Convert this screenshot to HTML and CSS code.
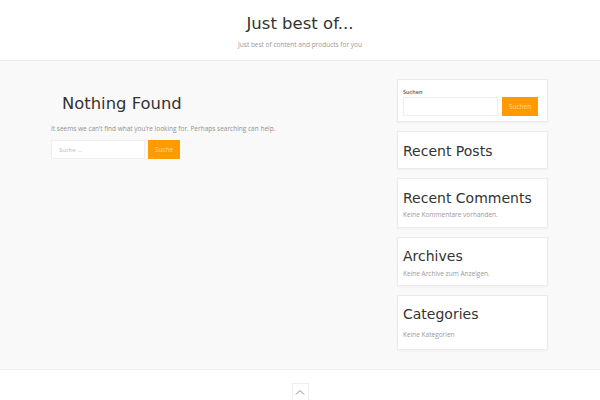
FILE: index.html
```html
<!DOCTYPE html>
<html>
<head>
<meta charset="utf-8">
<link rel="stylesheet" href="styles.css">
</head>
<body>
<header class="site-header">
  <div class="site-title">Just best of...</div>
  <div class="site-desc">Just best of content and products for you</div>
</header>
<div class="site-main">
  <div class="container">
    <main class="content">
      <h1 class="page-title">Nothing Found</h1>
      <p class="lead">It seems we can’t find what you’re looking for. Perhaps searching can help.</p>
      <form class="search-form">
        <input class="search-field" type="text" placeholder="Suche …">
        <button class="btn" type="button">Suche</button>
      </form>
    </main>
    <aside class="sidebar">
      <section class="widget widget-search">
        <label class="wlabel">Suchen</label>
        <div class="wsearch">
          <input class="wfield" type="text">
          <button class="btn btn-w" type="button">Suchen</button>
        </div>
      </section>
      <section class="widget w-posts">
        <h2 class="wtitle">Recent Posts</h2>
      </section>
      <section class="widget w-comments">
        <h2 class="wtitle">Recent Comments</h2>
        <p class="wtext">Keine Kommentare vorhanden.</p>
      </section>
      <section class="widget w-archives">
        <h2 class="wtitle">Archives</h2>
        <p class="wtext wtext-a">Keine Archive zum Anzeigen.</p>
      </section>
      <section class="widget w-cats">
        <h2 class="wtitle">Categories</h2>
        <p class="wtext wcat">Keine Kategorien</p>
      </section>
    </aside>
  </div>
</div>
<footer class="site-footer">
  <div class="totop">
    <svg width="10" height="6" viewBox="0 0 10 6"><path d="M1 5.5 L5 1.5 L9 5.5" fill="none" stroke="#888" stroke-width="1"/></svg>
  </div>
</footer>
</body>
</html>
```

FILE: styles.css
```css
* { box-sizing: border-box; }
html, body { margin: 0; padding: 0; }
body {
  width: 600px;
  height: 400px;
  overflow: hidden;
  background: #fff;
  font-family: "Open Sans", "Liberation Sans", sans-serif;
  color: #444;
}
.site-header {
  height: 61px;
  border-bottom: 1px solid #ececec;
  text-align: center;
  padding-top: 12px;
}
.site-title {
  font-family: "DejaVu Sans", sans-serif;
  font-size: 16.5px;
  line-height: 24px;
  color: #333;
}
.site-desc {
  font-size: 6.5px;
  line-height: 10px;
  margin-top: 4px;
  color: #999;
}
.site-main {
  background: #f9f9f9;
  height: 309px;
  border-bottom: 1px solid #f0f0f0;
}
.container {
  display: flex;
  padding: 18px 52px 0 51px;
}
.content {
  flex: 1;
  padding-top: 13px;
}
.page-title {
  margin: 0 0 0 11px;
  font-family: "DejaVu Sans", sans-serif;
  font-weight: normal;
  font-size: 16.4px;
  line-height: 24px;
  color: #333;
}
.lead {
  margin: 8px 0 0;
  font-size: 6.5px;
  line-height: 10px;
  color: #929292;
}
.search-form {
  display: flex;
  margin-top: 6px;
}
.search-field {
  width: 94px;
  height: 19px;
  border: 1px solid #eee;
  background: #fff;
  padding: 0 7px;
  font-family: inherit;
  font-size: 6px;
  outline: none;
}
.search-field::placeholder { color: #bbb; }
.btn {
  margin-left: 3px;
  width: 32px;
  height: 19px;
  border: 0;
  background: #ff9a00;
  color: #ffd79a;
  font-family: inherit;
  font-size: 6.5px;
  padding: 0;
}
.sidebar {
  width: 151px;
  display: flex;
  flex-direction: column;
  gap: 9px;
}
.widget {
  background: #fff;
  border: 1px solid #ececec;
  box-shadow: 0 1px 2px rgba(0,0,0,0.04);
  padding: 0 5px;
}
.widget-search {
  height: 43px;
  padding-top: 8px;
}
.wlabel {
  display: block;
  font-size: 5.5px;
  font-weight: 600;
  line-height: 8px;
  color: #555;
}
.wsearch {
  display: flex;
  margin-top: 1px;
}
.wfield {
  width: 95px;
  height: 19px;
  border: 1px solid #eee;
  background: #fff;
  outline: none;
}
.btn-w {
  margin-left: 4px;
  width: 36px;
}
.wtitle {
  margin: 0;
  font-family: "DejaVu Sans", sans-serif;
  font-weight: normal;
  font-size: 14px;
  line-height: 20px;
  color: #333;
}
.w-posts { height: 38px; padding-top: 9px; }
.w-comments { height: 50px; padding-top: 9px; }
.w-archives { height: 49px; padding-top: 8px; }
.w-cats { height: 55px; padding-top: 8px; }
.wtext {
  margin: 2px 0 0;
  font-size: 6.5px;
  line-height: 10px;
  color: #999;
}
.wtext-a { margin-top: 3px; }
.wcat { margin-top: 6px; }
.site-footer {
  height: 30px;
  background: #fff;
  display: flex;
  justify-content: center;
  padding-top: 13px;
}
.totop {
  width: 17px;
  height: 17px;
  border: 1px solid #eee;
  border-bottom: 0;
  display: flex;
  align-items: center;
  justify-content: center;
}
```
